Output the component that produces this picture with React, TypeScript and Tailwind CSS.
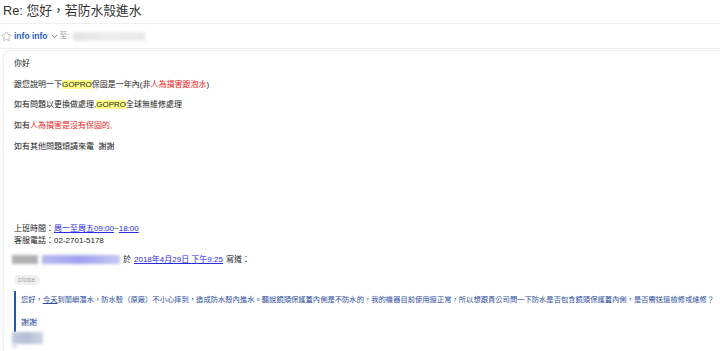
import { ChevronDown, Star } from "lucide-react";

const font = { fontFamily: '"Liberation Sans", "Noto Sans CJK TC", sans-serif' };

function Blur({ className }: { className: string }) {
  return <span className={`inline-block blur-[1.5px] ${className}`} />;
}

export default function App() {
  return (
    <div className="h-[351px] w-[720px] overflow-hidden bg-white text-[#222]" style={font}>
      <div className="flex h-[24px] items-center border-b border-[#f0f0f0] pl-[3px]">
        <h1 className="text-[12.8px] leading-none text-[#333]">Re: 您好，若防水殼進水</h1>
      </div>
      <div className="flex h-[25px] items-center border-b border-[#f0f0f0] pl-[1px]">
        <Star className="h-[11px] w-[11px] text-[#999]" strokeWidth={1.3} />
        <span className="ml-[2px] text-[8.5px] font-bold text-[#1f5fbf]">info info</span>
        <ChevronDown className="ml-[2px] h-[9px] w-[9px] text-[#555]" strokeWidth={2} />
        <span className="ml-[1px] text-[8px] text-[#999]">至:</span>
        <Blur className="ml-[3px] h-[9px] w-[72px] bg-gradient-to-r from-[#e4e4e4] via-[#eeeeee] to-[#e8e8e8]" />
      </div>
      <div className="ml-[3px] mt-[1px] h-[320px] rounded-tl-[8px] border-l border-t border-[#f0f0f0] pl-[10px] pt-[7px] text-[8px] leading-[12px]">
        <div className="flex flex-col gap-[8.7px]">
          <p>你好</p>
          <p>
            跟您說明一下<span className="bg-[#ffff88]">GOPRO</span>保固是一年內(非
            <span className="text-[#ee2222]">人為損害跟泡水</span>)
          </p>
          <p>
            如有問題以更換做處理,<span className="bg-[#ffff88]">GOPRO</span>全球無維修處理
          </p>
          <p>
            如有<span className="text-[#ee2222]">人為損害是沒有保固的,</span>
          </p>
          <p>如有其他問題煩請來電&nbsp;&nbsp;謝謝</p>
        </div>
        <div className="mt-[70px]">
          <p>
            上班時間：<span className="text-[#2a2ae0] underline">周一至周五09:00</span>~
            <span className="text-[#2a2ae0] underline">18:00</span>
          </p>
          <p>客服電話：02-2701-5178</p>
        </div>
        <div className="mt-[7px] flex items-center">
          <span className="-ml-[2px] inline-flex">
            <Blur className="h-[9px] w-[26px] bg-[#b0b0b0]" />
            <Blur className="ml-[4px] h-[9px] w-[78px] bg-gradient-to-r from-[#b8b8f0] via-[#a0a0f0] to-[#c8c8f4]" />
          </span>
          <span className="ml-[3px]">於</span>
          <span className="ml-[3px] text-[#2a2ae0] underline">2018年4月29日 下午9:25</span>
          <span className="ml-[3px]">寫道：</span>
        </div>
        <div className="mt-[8px]">
          <span className="inline-block rounded-full bg-[#f0f0f0] px-[4px] text-[7.5px] leading-[10px] text-[#aaa]">
            close
          </span>
        </div>
        <div className="mt-[5px] border-l-[2px] border-[#1a56c8] pb-[3px] pl-[5px] pt-[3px] text-[#2b4c9c]">
          <p className="whitespace-nowrap text-[7.3px]">
            您好，<span className="underline">今天</span>到蘭嶼潛水，防水殼（原廠）不小心摔到，造成防水殼內進水。聽說鏡頭保護蓋內側是不防水的，我的機器目前使用還正常，所以想跟貴公司問一下防水是否包含鏡頭保護蓋內側，是否需送還檢修或維修？
          </p>
          <p className="mt-[11px]">謝謝</p>
        </div>
        <div className="-ml-[2px] flex flex-col">
          <Blur className="h-[12px] w-[31px] bg-gradient-to-r from-[#c4cce0] via-[#b4bcd8] to-[#d0d6e6]" />
          <Blur className="h-[4px] w-[5px] bg-[#dde]" />
        </div>
      </div>
    </div>
  );
}
